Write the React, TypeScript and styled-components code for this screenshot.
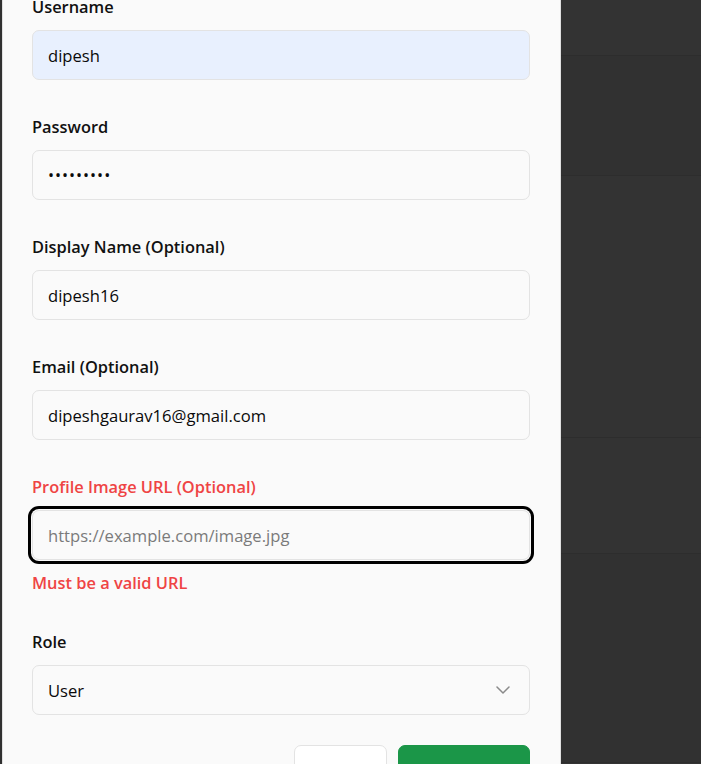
import React from "react";
import styled, { createGlobalStyle } from "styled-components";
import { ChevronDown } from "lucide-react";

const Global = createGlobalStyle`
  html, body { margin: 0; padding: 0; height: 100%; overflow: hidden; }
  body { background: #333333; font-family: "Open Sans", "Noto Sans", sans-serif; }
  #root { height: 100%; }
  * { box-sizing: border-box; }
`;

const Page = styled.div`
  display: flex;
  height: 764px;
  background: #333333;
`;

const Sliver = styled.div`
  width: 2px;
  flex: none;
  background: #303030;
`;

const Panel = styled.div`
  width: 559px;
  flex: none;
  background: #fafafa;
  border-left: 1px solid #e0e0e0;
  border-right: 1px solid #e0e0e0;
  overflow: hidden;
`;

const Form = styled.div`
  display: flex;
  flex-direction: column;
  gap: 35px;
  margin-top: -5px;
  padding: 0 30px 0 29px;
`;

const Field = styled.div`
  display: flex;
  flex-direction: column;
  gap: 11px;
`;

const Label = styled.label<{ $error?: boolean }>`
  font-size: 16.4px;
  line-height: 24px;
  font-weight: 600;
  color: ${(p) => (p.$error ? "#ef4444" : "#111111")};
`;

const Input = styled.input<{ $autofill?: boolean; $focus?: boolean }>`
  height: 50px;
  width: 100%;
  border: 1px solid #e3e3e3;
  border-radius: 7px;
  padding: 0 15px;
  font-family: inherit;
  font-size: 16.6px;
  color: #0a0a0a;
  background: ${(p) => (p.$autofill ? "#e8f0fe" : "#fafafa")};
  outline: none;
  box-shadow: ${(p) => (p.$focus ? "0 0 0 1px #fafafa, 0 0 0 4px #000" : "none")};
  &::placeholder { color: #7a7a7a; }
`;

const Password = styled(Input)`
  font-size: 16px;
  letter-spacing: 1px;
`;

const ErrorText = styled.p`
  margin: 0;
  font-size: 16.4px;
  line-height: 24px;
  font-weight: 600;
  color: #ef4444;
`;

const Select = styled.button`
  height: 50px;
  width: 100%;
  display: flex;
  align-items: center;
  justify-content: space-between;
  border: 1px solid #e3e3e3;
  border-radius: 7px;
  padding: 0 14px 0 15px;
  background: #fafafa;
  font-family: inherit;
  font-size: 16.6px;
  color: #0a0a0a;
  svg { color: #8a8a8a; }
`;

const Actions = styled.div`
  display: flex;
  justify-content: flex-end;
  gap: 11px;
  margin-top: -5px;
`;

const Button = styled.button<{ $primary?: boolean }>`
  height: 50px;
  border-radius: 7px;
  font-family: inherit;
  font-size: 16.6px;
  font-weight: 500;
  padding: 0 21px;
  border: 1px solid ${(p) => (p.$primary ? "#1b9648" : "#e3e3e3")};
  background: ${(p) => (p.$primary ? "#1b9648" : "#ffffff")};
  color: ${(p) => (p.$primary ? "#ffffff" : "#0a0a0a")};
  width: ${(p) => (p.$primary ? "132px" : "93px")};
`;

const Backdrop = styled.div`
  flex: 1;
  display: flex;
  flex-direction: column;
`;

const BgRow = styled.div<{ $h: number; $shade: string }>`
  height: ${(p) => p.$h}px;
  flex: none;
  background: ${(p) => p.$shade};
  border-bottom: 1px solid #2d2d2d;
`;

export default function App() {
  return (
    <>
      <Global />
      <Page>
        <Sliver />
        <Panel>
          <Form>
            <Field>
              <Label>Username</Label>
              <Input $autofill defaultValue="dipesh" />
            </Field>
            <Field>
              <Label>Password</Label>
              <Password type="password" defaultValue="dipesh123" />
            </Field>
            <Field>
              <Label>Display Name (Optional)</Label>
              <Input defaultValue="dipesh16" />
            </Field>
            <Field>
              <Label>Email (Optional)</Label>
              <Input defaultValue="dipeshgaurav16@gmail.com" />
            </Field>
            <Field>
              <Label $error>Profile Image URL (Optional)</Label>
              <Input $focus placeholder="https://example.com/image.jpg" />
              <ErrorText>Must be a valid URL</ErrorText>
            </Field>
            <Field>
              <Label>Role</Label>
              <Select type="button">
                <span>User</span>
                <ChevronDown size={24} strokeWidth={1.5} />
              </Select>
            </Field>
            <Actions>
              <Button type="button">Cancel</Button>
              <Button type="button" $primary>Save</Button>
            </Actions>
          </Form>
        </Panel>
        <Backdrop>
          <BgRow $h={56} $shade="#333333" />
          <BgRow $h={120} $shade="#313131" />
          <BgRow $h={262} $shade="#333333" />
          <BgRow $h={116} $shade="#333333" />
          <BgRow $h={209} $shade="#313131" />
        </Backdrop>
      </Page>
    </>
  );
}
